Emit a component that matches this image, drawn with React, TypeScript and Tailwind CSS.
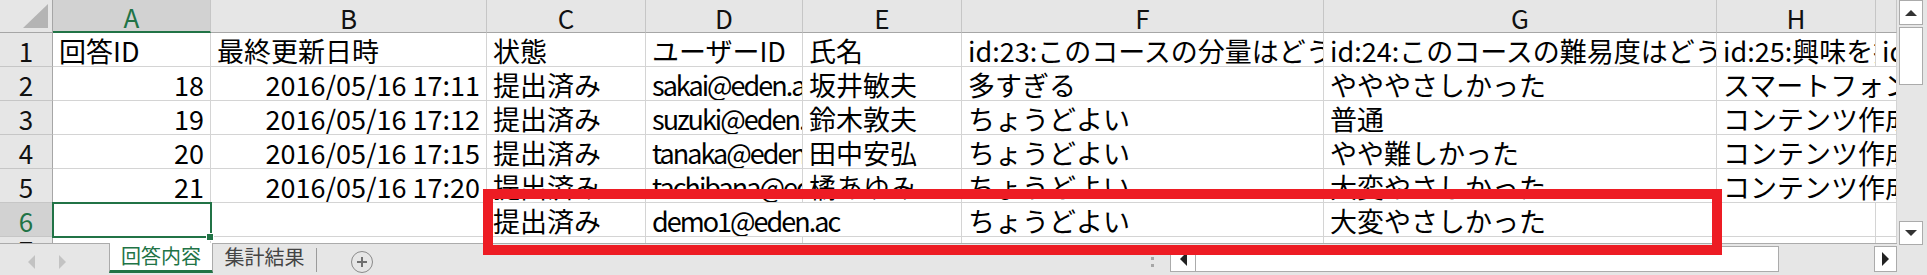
import clsx from 'clsx';

type Cell = { t?: string; r?: boolean; span?: boolean };

const cols = ['A', 'B', 'C', 'D', 'E', 'F', 'G', 'H', ''];

const rows: Cell[][] = [
  [
    { t: '回答ID' },
    { t: '最終更新日時' },
    { t: '状態' },
    { t: 'ユーザーID' },
    { t: '氏名' },
    { t: 'id:23:このコースの分量はどうでしたか？' },
    { t: 'id:24:このコースの難易度はどうでしたか？' },
    { t: 'id:25:興味を抱いたトピックは？' },
    { t: 'id:26:感想' },
  ],
  [
    { t: '18', r: true },
    { t: '2016/05/16 17:11', r: true },
    { t: '提出済み' },
    { t: 'sakai@eden.ac' },
    { t: '坂井敏夫' },
    { t: '多すぎる' },
    { t: 'やややさしかった' },
    { t: 'スマートフォンアプリ', span: true },
  ],
  [
    { t: '19', r: true },
    { t: '2016/05/16 17:12', r: true },
    { t: '提出済み' },
    { t: 'suzuki@eden.ac' },
    { t: '鈴木敦夫' },
    { t: 'ちょうどよい' },
    { t: '普通' },
    { t: 'コンテンツ作成', span: true },
  ],
  [
    { t: '20', r: true },
    { t: '2016/05/16 17:15', r: true },
    { t: '提出済み' },
    { t: 'tanaka@eden.ac' },
    { t: '田中安弘' },
    { t: 'ちょうどよい' },
    { t: 'やや難しかった' },
    { t: 'コンテンツ作成', span: true },
  ],
  [
    { t: '21', r: true },
    { t: '2016/05/16 17:20', r: true },
    { t: '提出済み' },
    { t: 'tachibana@eden.ac' },
    { t: '橘あゆみ' },
    { t: 'ちょうどよい' },
    { t: '大変やさしかった' },
    { t: 'コンテンツ作成', span: true },
  ],
  [
    {},
    {},
    { t: '提出済み' },
    { t: 'demo1@eden.ac', span: true },
    { t: 'ちょうどよい' },
    { t: '大変やさしかった' },
    {},
    {},
  ],
  [{}, {}, {}, {}, {}, {}, {}, {}, {}],
];

function Tri({ dir, className }: { dir: 'up' | 'down' | 'left' | 'right'; className?: string }) {
  const pts = {
    up: '0,6 6,0 12,6',
    down: '0,0 12,0 6,6',
    left: '7,0 7,14 0,7',
    right: '0,0 0,14 7,7',
  }[dir];
  const vb = dir === 'up' || dir === 'down' ? '0 0 12 6' : '0 0 7 14';
  return (
    <svg viewBox={vb} className={className}>
      <polygon points={pts} fill="currentColor" />
    </svg>
  );
}

function Grid() {
  return (
    <div className="h-[243px] overflow-hidden bg-white">
      <div className="grid grid-cols-[53px_158px_276px_159px_157px_159px_362px_393px_159px_21px] grid-rows-[33px_34px_34px_34px_34px_34px_34px]">
        {/* corner */}
        <div className="flex items-end justify-end border-r border-b border-[#a6a6a6] bg-[#e6e6e6] pr-[3px] pb-[4px]">
          <svg width="26" height="24" viewBox="0 0 26 24">
            <polygon points="25,0 25,24 0,24" fill="#b4b4b4" />
          </svg>
        </div>
        {cols.map((c, i) => (
          <div
            key={'h' + i}
            className={clsx(
              'flex items-end justify-center pb-[1px] text-[26px] leading-none',
              i === 0
                ? 'border-b-2 border-b-[#217346] bg-[#d2d2d2] text-[#217346]'
                : 'border-b border-b-[#a6a6a6] bg-[#e6e6e6] text-[#111]',
              'border-r border-r-[#c6c6c6]',
            )}
          >
            {c}
          </div>
        ))}
        {rows.map((row, ri) => [
          <div
            key={'r' + ri}
            className={clsx(
              'flex items-end justify-center border-r border-b border-r-[#a6a6a6] border-b-[#c6c6c6] pb-[2px] text-[26px] leading-none',
              ri === 5 ? 'bg-[#d2d2d2] text-[#217346]' : 'bg-[#e6e6e6] text-[#111]',
            )}
          >
            {ri + 1}
          </div>,
          ...row.map((c, ci) => (
            <div
              key={ri + '-' + ci}
              className={clsx(
                'flex items-end overflow-hidden whitespace-nowrap border-r border-b border-[#d4d4d4] px-[6px] pb-[2px] text-[27px] leading-none text-black',
                c.r && 'justify-end',
                c.span && 'col-span-2',
                ci === 3 && ri > 0 && 'tracking-[-2px]',
              )}
            >
              <span>{c.t}</span>
            </div>
          )),
        ])}
      </div>
    </div>
  );
}

function SheetTabs() {
  return (
    <div className="flex h-[32px] text-[20px] leading-none">
      <div className="flex w-[109px] items-start gap-[24px] border-t border-[#ababab] pt-[11px] pl-[28px] text-[#c3c3c3]">
        <Tri dir="left" className="h-[14px] w-[7px]" />
        <Tri dir="right" className="h-[14px] w-[7px]" />
      </div>
      <div className="flex h-[30px] w-[104px] items-start justify-center border-x border-b-[3px] border-x-[#ababab] border-b-[#217346] bg-white pt-[3px] text-[#217346]">
        回答内容
      </div>
      <div className="flex w-[103px] items-start justify-center border-t border-[#ababab] pt-[3px] text-[#444]">
        集計結果
      </div>
      <div className="flex w-[831px] items-start border-t border-[#ababab]">
        <div className="mt-[4px] h-[24px] w-px bg-[#9b9b9b]" />
        <div className="mt-[7px] ml-[34px] flex h-[22px] w-[22px] items-center justify-center rounded-full border-[1.5px] border-[#8a8a8a]">
          <svg width="12" height="12" viewBox="0 0 12 12">
            <path d="M6 1v10M1 6h10" stroke="#6f6f6f" strokeWidth="2" />
          </svg>
        </div>
      </div>
      <div className="flex w-[23px] flex-col items-start gap-[4px] border-t border-[#ababab] pt-[13px] pl-[4px]">
        <div className="h-[3px] w-[3px] bg-[#a6a6a6]" />
        <div className="h-[3px] w-[3px] bg-[#a6a6a6]" />
      </div>
      <div className="flex flex-1 items-start border-t border-[#ababab] pt-[2px]">
        <div className="flex h-[26px] w-[26px] items-center justify-center border border-[#ababab] bg-white text-[#222]">
          <Tri dir="left" className="h-[14px] w-[7px]" />
        </div>
        <div className="h-[26px] w-[583px] border-y border-r border-[#ababab] bg-white" />
        <div className="flex-1" />
        <div className="flex h-[26px] w-[23px] items-center justify-center border border-[#ababab] bg-white text-[#222]">
          <Tri dir="right" className="h-[14px] w-[7px]" />
        </div>
      </div>
    </div>
  );
}

function VScroll() {
  return (
    <div className="flex w-[30px] flex-col">
      <div className="flex h-[245px] flex-col pl-[2px] pr-[4px]">
        <div className="flex h-[25px] items-center justify-center border border-[#ababab] bg-white text-[#333]">
          <Tri dir="up" className="h-[6px] w-[12px]" />
        </div>
        <div className="mt-[2px] h-[58px] border border-[#ababab] bg-white" />
        <div className="flex-1" />
        <div className="flex h-[24px] items-center justify-center border border-[#ababab] bg-white text-[#333]">
          <Tri dir="down" className="h-[6px] w-[12px]" />
        </div>
      </div>
      <div className="flex-1" />
    </div>
  );
}

export default function App() {
  return (
    <div className="relative flex h-[275px] w-[1927px] overflow-hidden bg-[#e6e6e6] font-['Noto_Sans_CJK_JP',sans-serif]">
      <div className="flex w-[1897px] flex-col">
        <Grid />
        <SheetTabs />
      </div>
      <VScroll />

      {/* selected cell A6 */}
      <div className="absolute top-[202px] left-[52px] h-[36px] w-[160px] border-2 border-[#217346]" />
      <div className="absolute top-[233px] left-[206px] h-[8px] w-[8px] border border-white bg-[#217346]" />

      {/* red annotation box */}
      <div className="absolute top-[189px] left-[483px] h-[66px] w-[1239px] border-[10px] border-[#ed1c24]" />
    </div>
  );
}
